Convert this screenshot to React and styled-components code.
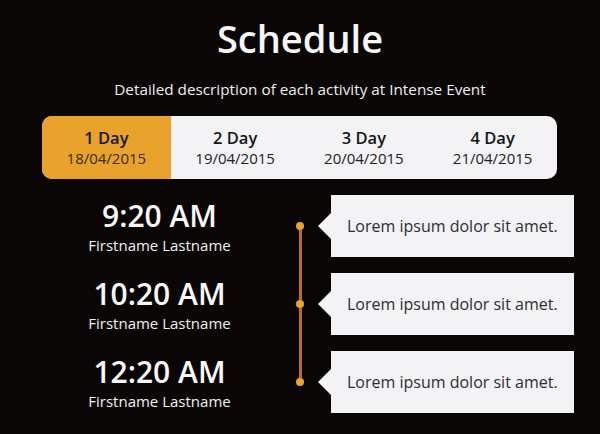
import React, {useState} from "react";
import styled, {createGlobalStyle} from "styled-components";

const GlobalStyle = createGlobalStyle`
  html, body {
    margin: 0;
    padding: 0;
    background: #0b0606;
  }
  body {
    font-family: "Open Sans", "Liberation Sans", sans-serif;
    color: #fff;
  }
`;

const Page = styled.div`
  width: 600px;
  height: 434px;
  overflow: hidden;
  box-sizing: border-box;
  padding-top: 14px;
`;

const Title = styled.h1`
  margin: 0;
  text-align: center;
  font-size: 38px;
  line-height: 48px;
  font-weight: 600;
  color: #f6f6f6;
`;

const Subtitle = styled.p`
  margin: 17px 0 0;
  text-align: center;
  font-size: 15.3px;
  line-height: 20px;
  color: #eeeeee;
`;

const Tabs = styled.div`
  display: grid;
  grid-template-columns: repeat(4, 1fr);
  margin: 17px 43px 0 42px;
  height: 63px;
  background: #f3f2f5;
  border-radius: 10px;
  overflow: hidden;
`;

const Tab = styled.button`
  border: 0;
  margin: 0;
  padding: 0 0 0;
  font-family: inherit;
  cursor: pointer;
  display: flex;
  flex-direction: column;
  align-items: center;
  justify-content: center;
  background: ${p => (p.$active ? "#e9a32c" : "transparent")};
  color: #151515;
`;

const TabDay = styled.span`
  font-size: 16.5px;
  font-weight: 600;
  line-height: 22px;
`;

const TabDate = styled.span`
  font-size: 15px;
  line-height: 19px;
  color: ${p => (p.$active ? "#3a2a10" : "#222")};
`;

const Timeline = styled.div`
  margin-top: 8px;
  display: flex;
  flex-direction: column;
`;

const Row = styled.div`
  display: grid;
  grid-template-columns: 235px 46px 1fr;
  margin-left: 42px;
  height: 78px;
`;

const TimeBlock = styled.div`
  display: flex;
  flex-direction: column;
  align-items: center;
  justify-content: center;
`;

const Time = styled.div`
  font-size: 30px;
  font-weight: 600;
  line-height: 38px;
  color: #f8f8f8;
`;

const Speaker = styled.div`
  font-size: 15px;
  line-height: 20px;
  color: #f0f0f0;
`;

const Rail = styled.div`
  display: flex;
  flex-direction: column;
  align-items: center;
  width: 46px;
`;

const Segment = styled.div`
  flex: 1;
  width: 3px;
  background: ${p => (p.$hidden ? "transparent" : "#b87218")};
`;

const Dot = styled.div`
  width: 8px;
  height: 8px;
  border-radius: 50%;
  background: #eba22e;
  flex: none;
`;

const Card = styled.div`
  position: relative;
  margin: 8px 26px 8px 8px;
  background: #f3f2f5;
  display: flex;
  align-items: center;
  padding-left: 16px;
  font-size: 16px;
  color: #2e2e2e;

  &::before {
    content: "";
    position: absolute;
    left: -13px;
    top: 50%;
    margin-top: -13px;
    border-style: solid;
    border-width: 13px 13px 13px 0;
    border-color: transparent #f3f2f5 transparent transparent;
  }
`;

const days = [
    {day: "1 Day", date: "18/04/2015"},
    {day: "2 Day", date: "19/04/2015"},
    {day: "3 Day", date: "20/04/2015"},
    {day: "4 Day", date: "21/04/2015"},
];

const events = [
    {time: "9:20 AM", who: "Firstname Lastname", text: "Lorem ipsum dolor sit amet."},
    {time: "10:20 AM", who: "Firstname Lastname", text: "Lorem ipsum dolor sit amet."},
    {time: "12:20 AM", who: "Firstname Lastname", text: "Lorem ipsum dolor sit amet."},
];

const App = () => {
    const [active, setActive] = useState(0);

    return (
        <Page>
            <GlobalStyle/>
            <Title>Schedule</Title>
            <Subtitle>Detailed description of each activity at Intense Event</Subtitle>
            <Tabs>
                {days.map((d, i) => (
                    <Tab key={i} $active={i === active} onClick={() => setActive(i)}>
                        <TabDay>{d.day}</TabDay>
                        <TabDate $active={i === active}>{d.date}</TabDate>
                    </Tab>
                ))}
            </Tabs>
            <Timeline>
                {events.map((e, i) => (
                    <Row key={i}>
                        <TimeBlock>
                            <Time>{e.time}</Time>
                            <Speaker>{e.who}</Speaker>
                        </TimeBlock>
                        <Rail>
                            <Segment $hidden={i === 0}/>
                            <Dot/>
                            <Segment $hidden={i === events.length - 1}/>
                        </Rail>
                        <Card>{e.text}</Card>
                    </Row>
                ))}
            </Timeline>
        </Page>
    )
}

export default App;
